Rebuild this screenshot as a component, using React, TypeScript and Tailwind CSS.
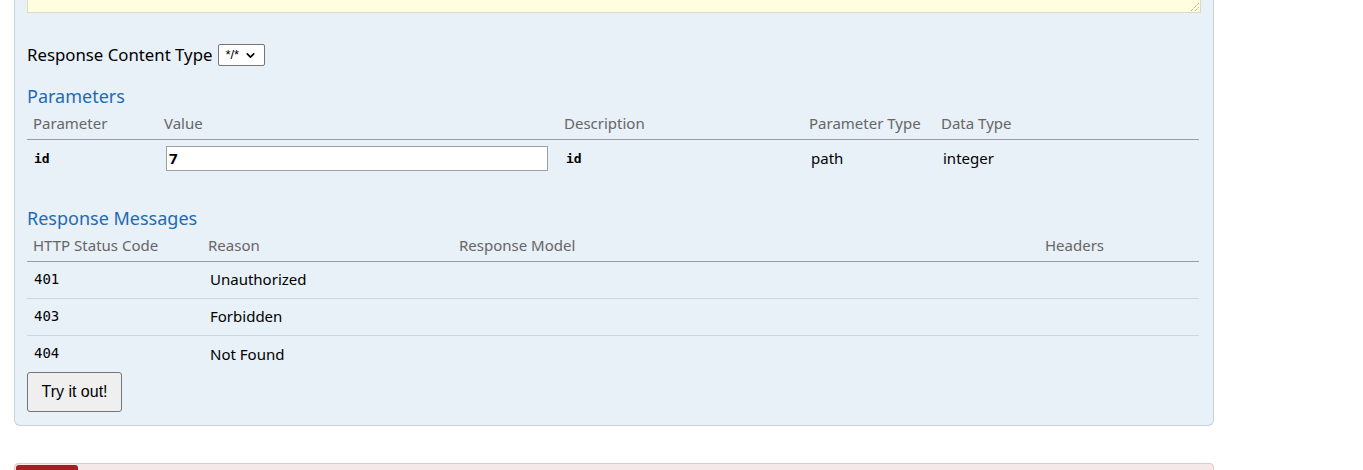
import { ChevronDown } from "lucide-react";

const sans = "font-['Noto_Sans','Open_Sans',sans-serif]";
const mono = "font-['DejaVu_Sans_Mono','Liberation_Mono',monospace]";

const params = [{ name: "id", value: "7", desc: "id", type: "path", dataType: "integer" }];

const messages = [
  { code: "401", reason: "Unauthorized" },
  { code: "403", reason: "Forbidden" },
  { code: "404", reason: "Not Found" },
];

function ResizeHandle() {
  return (
    <svg width="9" height="9" viewBox="0 0 9 9" className="absolute bottom-[1px] right-[1px]">
      <line x1="1" y1="9" x2="9" y2="1" stroke="#6b6b6b" strokeWidth="0.8" strokeDasharray="1 1" />
      <line x1="5" y1="9" x2="9" y2="5" stroke="#6b6b6b" strokeWidth="0.8" strokeDasharray="1 1" />
    </svg>
  );
}

export default function App() {
  return (
    <div className={`${sans} w-[1363px] h-[470px] bg-white overflow-hidden text-black`}>
      <div className="ml-[14px] w-[1200px] bg-[#e8f0f8] border border-t-0 border-[#c5d3e1] rounded-b-[6px] px-[12px] pb-[13px]">
        <div className="relative h-[13px] bg-[#ffffe0] border border-t-0 border-[#dcdcc4]">
          <ResizeHandle />
        </div>

        <div className="mt-[31px] h-[22px] flex items-center text-[16.8px]">
          <span>Response Content Type</span>
          <span className="ml-[6px] h-[22px] w-[47px] flex items-center bg-white border border-[#767676] rounded-[2px] pl-[6px] text-[13px] font-['Liberation_Sans',sans-serif]">
            */*
            <ChevronDown size={13} strokeWidth={3} className="ml-[5px]" />
          </span>
        </div>

        <h4 className="mt-[18px] h-[24px] leading-[24px] text-[18px] text-[#1f6bb0]">Parameters</h4>
        <table className="w-[1172px] table-fixed border-collapse text-[15px]">
          <colgroup>
            <col className="w-[131px]" />
            <col className="w-[400px]" />
            <col className="w-[245px]" />
            <col className="w-[132px]" />
            <col className="w-[264px]" />
          </colgroup>
          <thead>
            <tr className="h-[31px] border-b border-[#999ca3] text-[#666] text-left">
              <th className="font-normal px-[6px]">Parameter</th>
              <th className="font-normal px-[6px]">Value</th>
              <th className="font-normal px-[6px]">Description</th>
              <th className="font-normal px-[6px]">Parameter Type</th>
              <th className="font-normal px-[6px]">Data Type</th>
            </tr>
          </thead>
          <tbody>
            {params.map((p) => (
              <tr key={p.name} className="h-[38px]">
                <td className={`${mono} font-bold text-[13px] px-[7px]`}>{p.name}</td>
                <td className="px-[6px]">
                  <div className="ml-[2px] w-[382px] h-[25px] bg-white border border-[#a0a0a0] flex items-center px-[2px] font-bold text-[15px]">
                    {p.value}
                  </div>
                </td>
                <td className={`${mono} font-bold text-[13px] px-[8px]`}>{p.desc}</td>
                <td className="px-[8px]">{p.type}</td>
                <td className="px-[8px]">{p.dataType}</td>
              </tr>
            ))}
          </tbody>
        </table>

        <h4 className="mt-[29px] h-[24px] leading-[24px] text-[18px] text-[#1f6bb0]">Response Messages</h4>
        <table className="w-[1172px] table-fixed border-collapse text-[15px]">
          <colgroup>
            <col className="w-[175px]" />
            <col className="w-[251px]" />
            <col className="w-[586px]" />
            <col className="w-[160px]" />
          </colgroup>
          <thead>
            <tr className="h-[31px] border-b border-[#999ca3] text-[#666] text-left">
              <th className="font-normal px-[6px]">HTTP Status Code</th>
              <th className="font-normal px-[6px]">Reason</th>
              <th className="font-normal px-[6px]">Response Model</th>
              <th className="font-normal px-[6px]">Headers</th>
            </tr>
          </thead>
          <tbody>
            {messages.map((m, i) => (
              <tr key={m.code} className={`h-[37px] ${i < messages.length - 1 ? "border-b border-[#cfd6dd]" : ""}`}>
                <td className={`${mono} text-[14px] px-[7px]`}>{m.code}</td>
                <td className="px-[8px]">{m.reason}</td>
                <td />
                <td />
              </tr>
            ))}
          </tbody>
        </table>

        <button className="w-[95px] h-[40px] bg-[#efefef] border border-[#767676] rounded-[3px] text-[16px] font-['Liberation_Sans',Arial,sans-serif]">
          Try it out!
        </button>
      </div>

      <div className="mt-[37px] ml-[14px] w-[1200px] h-[20px] bg-[#f5e8e8] border border-[#e8c6c7] rounded-t-[4px] pl-[1px] pt-[1px]">
        <div className="w-[62px] h-[20px] bg-[#a41e22] rounded-t-[3px]" />
      </div>
    </div>
  );
}
